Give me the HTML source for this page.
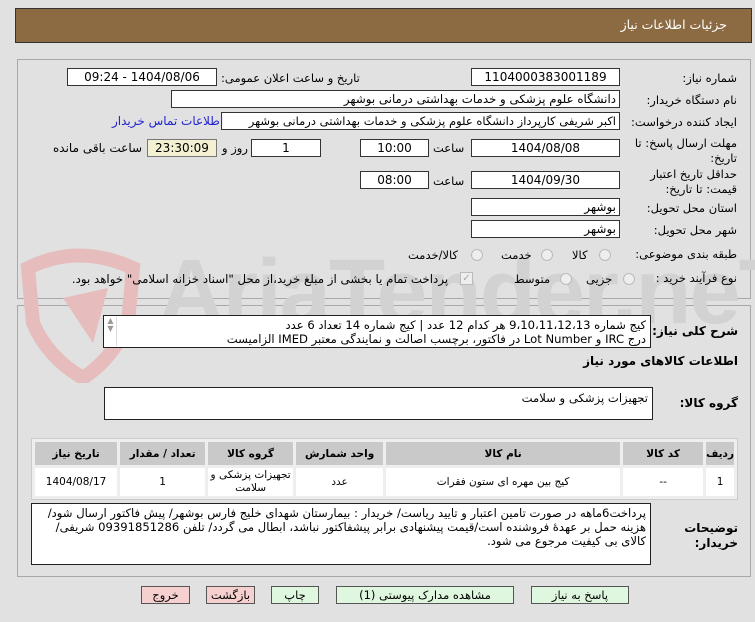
<!DOCTYPE html>
<html><head><meta charset="utf-8">
<style>
*{margin:0;padding:0;box-sizing:border-box}
body{width:755px;height:622px;background:#e1e1e1;font-family:"DejaVu Sans","Liberation Sans",sans-serif;font-size:11px;color:#000;position:relative;overflow:hidden;direction:rtl}
.a{position:absolute;white-space:nowrap}
.hdr{left:15px;top:8px;width:737px;height:35px;background:#8c6b42;border:1px solid #333}
.panel{border:1px solid #a8a8a8;position:absolute}
.in{position:absolute;background:#fff;border:1px solid #333;text-align:center;font-size:12px;line-height:16px;height:18px;white-space:nowrap;overflow:hidden}
.lbl{position:absolute;white-space:nowrap;text-align:right;font-size:11.5px}
.b{font-weight:bold}
.rad{position:absolute;width:12px;height:12px;border-radius:50%;border:1px solid #bbb;background:#eee}
.ta{position:absolute;background:#fff;border:1px solid #222;padding:2px 4px;text-align:right;line-height:14px;white-space:nowrap;font-size:11.6px;overflow:hidden}
table{position:absolute;left:31px;top:438px;width:707px;border-collapse:separate;border-spacing:3px;background:#eee;border:1px solid #ccc}
th{background:#c9c9c9;height:23px;font-weight:bold;font-size:10.5px}
td{background:#fff;height:28px;text-align:center;font-size:10.5px;line-height:13px}
.btn{position:absolute;top:586px;height:18px;border:1px solid #555;background:#dff7df;text-align:center;font-size:11.5px;line-height:16px}
.pk{background:#f6cfcf}
#wm{position:absolute;left:0;top:240px;width:755px;height:150px;overflow:hidden}
</style></head><body>
<div class="a hdr"></div>
<div class="a" style="right:28px;top:17px;color:#fff;font-size:12.5px">جزئیات اطلاعات نیاز</div>

<div class="panel" style="left:17px;top:59px;width:734px;height:240px"></div>
<div class="panel" style="left:17px;top:305px;width:734px;height:272px"></div>

<div id="wm">
<svg class="a" style="left:18px;top:8px" width="130" height="135" viewBox="0 0 130 135"><path d="M10 20 Q60 -5 115 20 L110 75 Q95 110 65 130 Q30 110 15 75 Z" fill="none" stroke="#e6bcbc" stroke-width="14"/><path d="M45 50 L90 40 L75 95 Z" fill="#e6bcbc"/></svg>
<div class="a" style="left:158px;top:0px;font-size:92px;color:#d2d2d2;font-weight:bold;font-family:'Liberation Sans',sans-serif;direction:ltr;letter-spacing:-2px">AriaTender.neT</div>
</div>

<div class="lbl" style="right:18px;top:71px">شماره نیاز:</div>
<div class="in" style="left:471px;top:68px;width:149px">1104000383001189</div>
<div class="lbl" style="left:221px;top:71px">تاریخ و ساعت اعلان عمومی:</div>
<div class="in" style="left:67px;top:68px;width:150px">1404/08/06 - 09:24</div>

<div class="lbl" style="right:18px;top:93px">نام دستگاه خریدار:</div>
<div class="in" style="left:171px;top:90px;width:449px;text-align:right;padding-right:3px;font-size:11.8px">دانشگاه علوم پزشکی و خدمات بهداشتی درمانی بوشهر</div>

<div class="lbl" style="right:18px;top:115px">ایجاد کننده درخواست:</div>
<div class="in" style="left:221px;top:112px;width:399px;text-align:right;padding-right:3px;font-size:11.5px">اکبر شریفی کارپرداز دانشگاه علوم پزشکی و خدمات بهداشتی درمانی بوشهر</div>
<div class="lbl" style="left:112px;top:114px;color:#2323d0;font-size:12px">اطلاعات تماس خریدار</div>

<div class="lbl" style="right:18px;top:136px;line-height:15px;text-align:right">مهلت ارسال پاسخ: تا<br>تاریخ:</div>
<div class="in" style="left:471px;top:139px;width:149px">1404/08/08</div>
<div class="lbl" style="left:433px;top:141px">ساعت</div>
<div class="in" style="left:360px;top:139px;width:69px">10:00</div>
<div class="in" style="left:251px;top:139px;width:70px">1</div>
<div class="lbl" style="left:222px;top:141px">روز و</div>
<div class="in" style="left:147px;top:139px;width:70px;background:#f4f1d2;border-color:#777">23:30:09</div>
<div class="lbl" style="left:53px;top:141px;font-size:12px">ساعت باقی مانده</div>

<div class="lbl" style="right:18px;top:167px;line-height:15px">حداقل تاریخ اعتبار<br>قیمت: تا تاریخ:</div>
<div class="in" style="left:471px;top:171px;width:149px">1404/09/30</div>
<div class="lbl" style="left:433px;top:174px">ساعت</div>
<div class="in" style="left:360px;top:171px;width:69px">08:00</div>

<div class="lbl" style="right:18px;top:201px">استان محل تحویل:</div>
<div class="in" style="left:471px;top:198px;width:149px;text-align:right;padding-right:3px">بوشهر</div>
<div class="lbl" style="right:18px;top:223px">شهر محل تحویل:</div>
<div class="in" style="left:471px;top:220px;width:149px;text-align:right;padding-right:3px">بوشهر</div>

<div class="lbl" style="right:18px;top:247px">طبقه بندی موضوعی:</div>
<div class="rad" style="left:599px;top:249px"></div>
<div class="lbl" style="left:572px;top:248px">کالا</div>
<div class="rad" style="left:541px;top:249px"></div>
<div class="lbl" style="left:501px;top:248px">خدمت</div>
<div class="rad" style="left:471px;top:249px"></div>
<div class="lbl" style="left:408px;top:248px">کالا/خدمت</div>

<div class="lbl" style="right:18px;top:271px">نوع فرآیند خرید :</div>
<div class="rad" style="left:623px;top:273px"></div>
<div class="lbl" style="left:586px;top:272px">جزیی</div>
<div class="rad" style="left:560px;top:273px"></div>
<div class="lbl" style="left:514px;top:272px">متوسط</div>
<div class="a" style="left:460px;top:272px;width:13px;height:13px;border:1px solid #bbb;background:#eee;color:#aaa;font-size:10px;line-height:11px;text-align:center">✓</div>
<div class="lbl" style="left:67px;top:272px;font-size:11.8px;width:386px;text-align:center">پرداخت تمام یا بخشی از مبلغ خرید،از محل "اسناد خزانه اسلامی" خواهد بود.</div>

<div class="lbl b" style="right:17px;top:324px;font-size:12px">شرح کلی نیاز:</div>
<div class="ta" style="left:103px;top:315px;width:548px;height:33px">کیج شماره 9،10،11،12،13 هر کدام 12 عدد | کیج شماره 14 تعداد 6 عدد<br>درج IRC و Lot Number در فاکتور، برچسب اصالت و نمایندگی معتبر IMED الزامیست</div>
<div class="a" style="left:105px;top:317px;width:12px;height:29px;border-right:1px solid #ddd;color:#999;font-size:8px;line-height:8px;text-align:center">▲<br>▼</div>

<div class="lbl b" style="right:17px;top:354px;font-size:12px">اطلاعات کالاهای مورد نیاز</div>

<div class="lbl b" style="right:17px;top:396px;font-size:12px">گروه کالا:</div>
<div class="ta" style="left:104px;top:387px;width:549px;height:33px;padding-top:3px">تجهیزات پزشکی و سلامت</div>

<table>
<tr><th style="width:26px">ردیف</th><th style="width:80px">کد کالا</th><th style="width:234px">نام کالا</th><th style="width:87px">واحد شمارش</th><th style="width:85px">گروه کالا</th><th style="width:85px">تعداد / مقدار</th><th>تاریخ نیاز</th></tr>
<tr><td>1</td><td>--</td><td>کیج بین مهره ای ستون فقرات</td><td>عدد</td><td>تجهیزات پزشکی و سلامت</td><td>1</td><td>1404/08/17</td></tr>
</table>

<div class="lbl b" style="right:17px;top:521px;font-size:12px;line-height:15px">توضیحات<br>خریدار:</div>
<div class="ta" style="left:31px;top:503px;width:620px;height:62px;font-size:11.6px">پرداخت6ماهه در صورت تامین اعتبار و تایید ریاست/ خریدار : بیمارستان شهدای خلیج فارس بوشهر/ پیش فاکتور ارسال شود/<br>هزینه حمل بر عهدهٔ فروشنده است/قیمت پیشنهادی برابر پیشفاکتور نباشد، ابطال می گردد/ تلفن 09391851286 شریفی/<br>کالای بی کیفیت مرجوع می شود.</div>

<div class="btn" style="left:531px;width:98px">پاسخ به نیاز</div>
<div class="btn" style="left:336px;width:178px">مشاهده مدارک پیوستی (1)</div>
<div class="btn" style="left:271px;width:48px">چاپ</div>
<div class="btn pk" style="left:206px;width:49px">بازگشت</div>
<div class="btn pk" style="left:141px;width:49px">خروج</div>
</body></html>
